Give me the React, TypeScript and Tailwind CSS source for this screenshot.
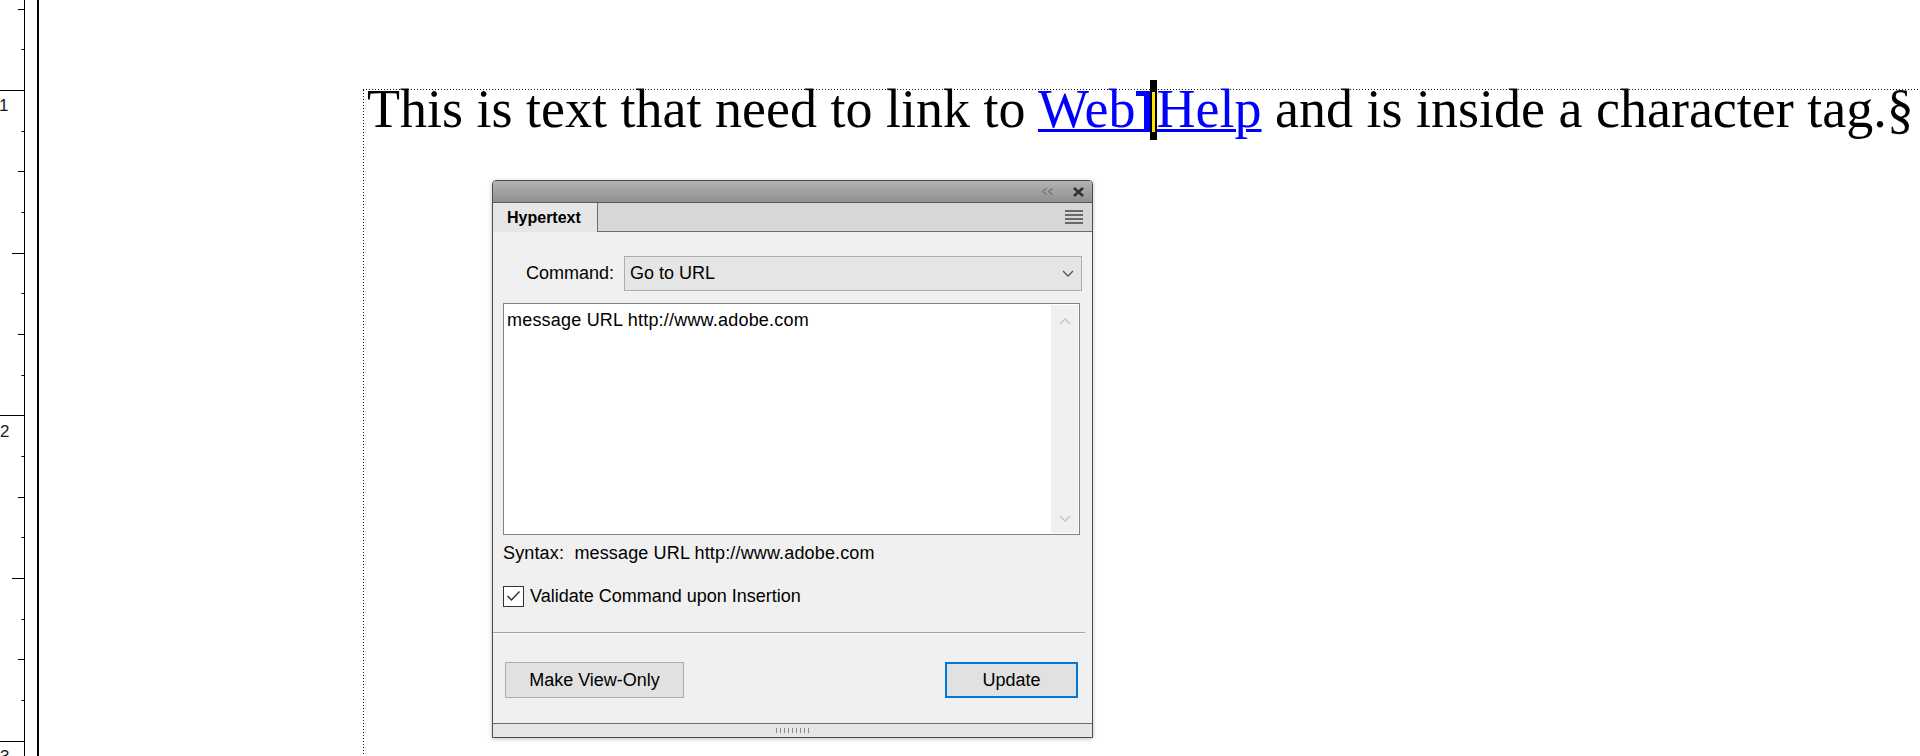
const Ruler = () => {
    const ticks = []
    for (let i = -2; i <= 16; i++) {
        const y = Math.round(90 + i * 40.675) + 0.5
        const m = ((i % 8) + 8) % 8
        const len = m === 0 ? 24 : m === 4 ? 12 : m % 2 === 0 ? 6 : 2.5
        ticks.push(<line key={i} x1={24 - len} y1={y} x2={24} y2={y} stroke="#000" strokeWidth={1} />)
    }
    return (
        <svg width="24" height="756" className="shrink-0 font-['Liberation_Sans',Arial,sans-serif]">
            {ticks}
            <text x="-1" y="111" fontSize="17" fill="#1a1a1a">1</text>
            <text x="0" y="437" fontSize="17" fill="#1a1a1a">2</text>
            <text x="0" y="762" fontSize="17" fill="#1a1a1a">3</text>
        </svg>
    )
}

// hypertext marker + insertion caret, drawn over the line without growing it
const MarkerCaret = () => (
    <span className="relative inline-block w-[21px] h-0">
        <svg width="23" height="60" className="absolute left-[-1px] bottom-[-13px]">
            <rect x="0" y="49" width="23" height="3" fill="#0000ff" />
            <rect x="1" y="11" width="17" height="5" fill="#0000ff" />
            <rect x="9" y="16" width="6" height="34" fill="#0000ff" />
            <rect x="15" y="0" width="7" height="60" fill="#000" />
            <rect x="17" y="12" width="3" height="40" fill="#ffe600" />
        </svg>
    </span>
)

const Chevron = ({ up = false, color = "#555" }: { up?: boolean; color?: string }) => (
    <svg width="12" height="7" viewBox="0 0 12 7">
        <path d={up ? "M1 6 L6 1 L11 6" : "M1 1 L6 6 L11 1"} fill="none" stroke={color} strokeWidth="1.3" />
    </svg>
)

const HypertextPanel = () => {
    return (
        <div className="ml-[128px] mt-[52px] w-[601px] h-[558px] shrink-0 flex flex-col border border-[#4d4d4d] rounded-t-[4px] bg-[#f0f0f0] shadow-[0_1px_4px_rgba(0,0,0,0.25)] font-['Liberation_Sans',Arial,sans-serif] text-[18px] text-black overflow-hidden">
            <div className="h-[22px] shrink-0 flex items-center justify-end gap-[19px] pr-[8px] bg-gradient-to-b from-[#b3b3b3] to-[#8f8f8f] border-b border-[#5a5a5a]">
                <svg width="13" height="7" viewBox="0 0 13 7">
                    <path d="M5.5 0.5 L1.5 3.5 L5.5 6.5 M11.5 0.5 L7.5 3.5 L11.5 6.5" fill="none" stroke="#707070" strokeWidth="1.2" />
                </svg>
                <svg width="11" height="10" viewBox="0 0 11 10">
                    <path d="M1 1 L10 9 M10 1 L1 9" fill="none" stroke="#2e2e2e" strokeWidth="2.4" />
                </svg>
            </div>

            <div className="h-[29px] shrink-0 flex">
                <div className="w-[105px] border-r border-[#6b6b6b] bg-[#e6e6e6] flex items-center pl-[14px] text-[16px] font-bold">Hypertext</div>
                <div className="flex-1 flex items-center justify-end pr-[9px] bg-[#d7d7d7] border-b border-[#6b6b6b]">
                    <svg width="18" height="14" viewBox="0 0 18 14">
                        <path d="M0 1 H18 M0 5 H18 M0 9 H18 M0 13 H18" stroke="#444" strokeWidth="1.4" />
                    </svg>
                </div>
            </div>

            <div className="flex-1 flex flex-col">
                <div className="px-[10px] flex flex-col">
                    <div className="mt-[24px] h-[35px] flex items-center gap-[10px]">
                        <span className="w-[111px] text-right">Command:</span>
                        <div className="flex-1 h-full flex items-center justify-between pl-[5px] pr-[7px] border border-[#adadad] bg-[#e5e5e5]">
                            <span>Go to URL</span>
                            <Chevron />
                        </div>
                    </div>

                    <div className="mt-[12px] mr-[2px] h-[232px] flex border border-[#828282] bg-white">
                        <div className="flex-1 pl-[3px] pt-[6px] leading-[20px] tracking-[0.2px]">message URL http://www.adobe.com</div>
                        <div className="w-[27px] my-[1px] mr-[1px] bg-[#f0f0f0] flex flex-col items-center justify-between pt-[13px] pb-[11px]">
                            <Chevron up color="#c2c2c2" />
                            <Chevron color="#c2c2c2" />
                        </div>
                    </div>

                    <div className="mt-[8px] leading-[20px] whitespace-pre tracking-[0.15px]">Syntax:  message URL http://www.adobe.com</div>

                    <div className="mt-[23px] h-[20px] flex items-center gap-[6px]">
                        <div className="w-[21px] h-[21px] border border-[#333] bg-white flex items-center justify-center">
                            <svg width="15" height="12" viewBox="0 0 15 12">
                                <path d="M1.5 6 L5.5 10 L13.5 1.5" fill="none" stroke="#333" strokeWidth="1.5" />
                            </svg>
                        </div>
                        <span>Validate Command upon Insertion</span>
                    </div>
                </div>

                <div className="mt-[26px] mr-[7px] border-t border-[#a0a0a0] border-b border-b-white" />

                <div className="mt-[28px] pl-[12px] pr-[14px] flex justify-between">
                    <button className="w-[179px] h-[36px] border border-[#adadad] bg-[#e1e1e1]">Make View-Only</button>
                    <button className="w-[133px] h-[36px] border-2 border-[#0078d7] bg-[#e1e1e1]">Update</button>
                </div>

                <div className="flex-1" />

                <div className="h-[14px] shrink-0 border-t border-[#6b6b6b] bg-[#e6e6e6] flex items-center justify-center">
                    <svg width="33" height="5" viewBox="0 0 33 5">
                        <path d="M0.5 0 V5 M4.5 0 V5 M8.5 0 V5 M12.5 0 V5 M16.5 0 V5 M20.5 0 V5 M24.5 0 V5 M28.5 0 V5 M32.5 0 V5" stroke="#8a8a8a" strokeWidth="1" />
                    </svg>
                </div>
            </div>
        </div>
    )
}

const App = () => {
    return (
        <div className="flex h-[756px] w-[1920px] overflow-hidden bg-white">
            <Ruler />
            <div className="w-px shrink-0 bg-black" />
            <div className="w-[12px] shrink-0" />
            <div className="w-[2px] shrink-0 bg-black" />

            <div className="flex-1 pl-[324px] pt-[89px]">
                <div className="flex flex-col h-full">
                    <div className="h-px shrink-0 bg-[repeating-linear-gradient(to_right,#111_0_1px,transparent_1px_3px)]" />
                    <div className="flex flex-1">
                        <div className="w-px bg-[repeating-linear-gradient(to_bottom,#111_0_1px,transparent_1px_3px)]" />
                        <div className="flex-1 flex flex-col">
                            <p className="pl-[3px] font-['Liberation_Serif','Times_New_Roman',serif] text-[54px] leading-[38px] text-black whitespace-nowrap">
                                This is text that need to link to{" "}
                                <span className="text-[#0000ff] underline decoration-[#0000ff] decoration-[length:3px] underline-offset-[2px]">Web</span>
                                <MarkerCaret />
                                <span className="text-[#0000ff] underline decoration-[#0000ff] decoration-[length:3px] underline-offset-[2px]">Help</span>
                                {" "}and is inside a character tag.§
                            </p>
                            <HypertextPanel />
                        </div>
                    </div>
                </div>
            </div>
        </div>
    )
}

export default App
